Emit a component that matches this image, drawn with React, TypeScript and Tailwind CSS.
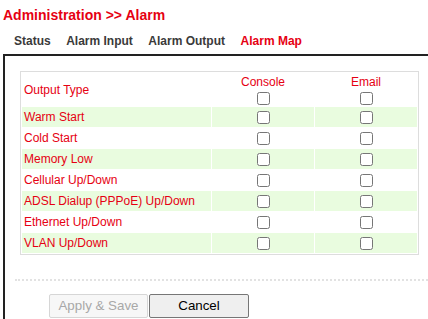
const tabs = [
  { label: "Status", active: false },
  { label: "Alarm Input", active: false },
  { label: "Alarm Output", active: false },
  { label: "Alarm Map", active: true },
];

const rows = [
  "Warm Start",
  "Cold Start",
  "Memory Low",
  "Cellular Up/Down",
  "ADSL Dialup (PPPoE) Up/Down",
  "Ethernet Up/Down",
  "VLAN Up/Down",
];

const Check = () => <input type="checkbox" className="m-0 h-[13px] w-[13px] align-middle" />;

export default function App() {
  return (
    <div className="h-[319px] w-[428px] overflow-hidden bg-white font-['Liberation_Sans',Arial,sans-serif]">
      <h1 className="pl-[3px] pt-[6.5px] text-[14px] font-bold leading-4 text-[#e60012]">
        Administration &gt;&gt; Alarm
      </h1>

      <div className="mt-[11px] flex pl-[14px] text-[12px] font-bold leading-[14px]">
        {tabs.map((t) => (
          <span
            key={t.label}
            className={`mr-[15.5px] ${t.active ? "text-[#e60012]" : "text-[#3a3a3a]"}`}
          >
            {t.label}
          </span>
        ))}
      </div>

      <div className="ml-[3px] mt-[6.5px] h-[300px] border-l-2 border-t-2 border-[#222] pl-[15px] pt-[15px]">
        <table className="w-[399px] table-fixed border-separate border-spacing-[1px] border border-[#ddd] text-[12px] text-[#e60012]">
          <colgroup>
            <col className="w-[189px]" />
            <col className="w-[102px]" />
            <col className="w-[102px]" />
          </colgroup>
          <thead>
            <tr>
              <td className="h-[33px] p-0 pl-[2px] text-left align-middle font-normal">Output Type</td>
              <td className="h-[33px] p-0 text-center align-middle">
                <div className="leading-[14px]">Console</div>
                <div className="mt-[3px] flex justify-center">
                  <Check />
                </div>
              </td>
              <td className="h-[33px] p-0 text-center align-middle">
                <div className="leading-[14px]">Email</div>
                <div className="mt-[3px] flex justify-center">
                  <Check />
                </div>
              </td>
            </tr>
          </thead>
          <tbody>
            {rows.map((r, i) => {
              const bg = i % 2 === 0 ? "bg-[#e9fcdf]" : "bg-white";
              return (
                <tr key={r}>
                  <td className={`h-[20px] p-0 pl-[2px] align-middle leading-[14px] ${bg}`}>{r}</td>
                  <td className={`h-[20px] p-0 text-center align-middle ${bg}`}>
                    <div className="flex justify-center">
                      <Check />
                    </div>
                  </td>
                  <td className={`h-[20px] p-0 text-center align-middle ${bg}`}>
                    <div className="flex justify-center">
                      <Check />
                    </div>
                  </td>
                </tr>
              );
            })}
          </tbody>
        </table>

        <div className="-ml-[5px] mt-[23.5px] border-t-2 border-dotted border-[#e2e2e2]" />

        <div className="flex pl-[29px] pt-[13px] text-[13.33px]">
          <button
            disabled
            className="h-[24px] w-[99px] rounded-[2px] border border-[#d6d6d6] bg-[#f7f7f7] text-[#a8a8a8]"
          >
            Apply &amp; Save
          </button>
          <button className="ml-px h-[24px] w-[100px] rounded-[2px] border border-[#767676] bg-[#efefef] text-black">
            Cancel
          </button>
        </div>
      </div>
    </div>
  );
}
